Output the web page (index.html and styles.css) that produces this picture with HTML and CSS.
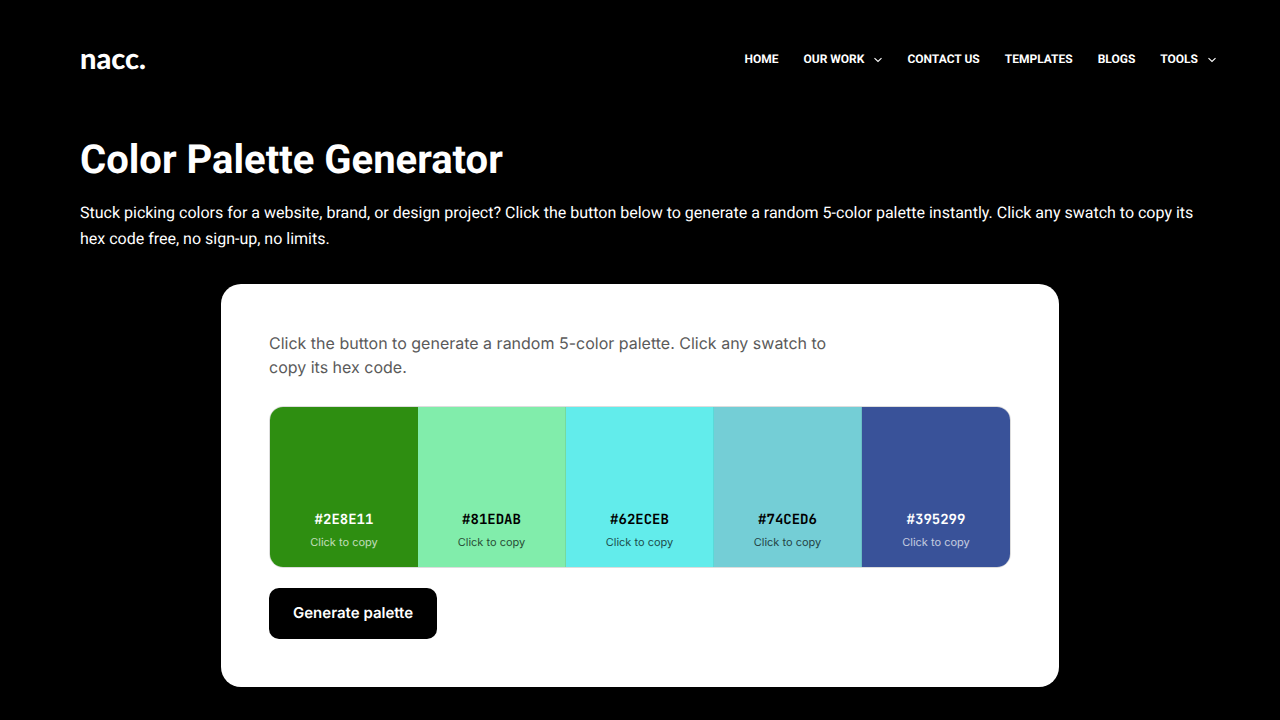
FILE: index.html
```html
<!DOCTYPE html>
<html lang="en">
<head>
<meta charset="utf-8">
<meta name="viewport" content="width=device-width, initial-scale=1">
<title>Color Palette Generator</title>
<link rel="stylesheet" href="styles.css">
</head>
<body>
<header class="header">
  <a class="logo" href="#">nacc.</a>
  <nav class="nav">
    <a href="#">HOME</a>
    <a href="#">OUR WORK <svg class="chevron" viewBox="0 0 8 8"><path d="M0.5 3.2 4 6.5 7.5 3.2"/></svg></a>
    <a href="#">CONTACT US</a>
    <a href="#">TEMPLATES</a>
    <a href="#">BLOGS</a>
    <a href="#">TOOLS <svg class="chevron" viewBox="0 0 8 8"><path d="M0.5 3.2 4 6.5 7.5 3.2"/></svg></a>
  </nav>
</header>
<main class="main">
  <h1 class="title">Color Palette Generator</h1>
  <p class="intro">Stuck picking colors for a website, brand, or design project? Click the button below to generate a random 5-color palette instantly. Click any swatch to copy its hex code free, no sign-up, no limits.</p>
  <section class="card">
    <p class="hint">Click the button to generate a random 5-color palette. Click any swatch to copy its hex code.</p>
    <div class="palette">
      <button class="swatch green light"><span class="hex">#2E8E11</span><span class="copy">Click to copy</span></button>
      <button class="swatch mint"><span class="hex">#81EDAB</span><span class="copy">Click to copy</span></button>
      <button class="swatch cyan"><span class="hex">#62ECEB</span><span class="copy">Click to copy</span></button>
      <button class="swatch teal"><span class="hex">#74CED6</span><span class="copy">Click to copy</span></button>
      <button class="swatch blue light"><span class="hex">#395299</span><span class="copy">Click to copy</span></button>
    </div>
    <button class="generate">Generate palette</button>
  </section>
</main>
</body>
</html>
```
FILE: styles.css
```css
* { box-sizing: border-box; }
body { margin: 0; background: #000; color: #fff; font-family: Roboto, sans-serif; text-rendering: geometricPrecision; }
.header { display: flex; align-items: center; justify-content: space-between; padding: 41px 64px 41px 80px; }
.logo { color: #fff; font: 900 29px/36px Lato, sans-serif; text-decoration: none; }
.nav { display: flex; gap: 25px; }
.nav a { display: flex; align-items: center; gap: 10px; color: #fff; font-size: 12px; line-height: 20px; font-weight: 700; text-decoration: none; }
.chevron { width: 8px; height: 8px; fill: none; stroke: #fff; stroke-width: 1.1; }
.main { padding: 12px 80px 32px; }
.title { margin: 0 0 10px; font-size: 40px; line-height: 60px; font-weight: 700; }
.intro { margin: 0 0 32px; font-size: 16px; line-height: 26px; }
.card { max-width: 838px; margin: 0 auto; padding: 47px 48px 48px; border-radius: 20px; background: #fff; font-family: Inter, sans-serif; }
.hint { max-width: 560px; margin: 0 0 27px; color: #5a5a5a; font-size: 16px; line-height: 24px; }
.palette { display: grid; grid-template-columns: repeat(5, 1fr); overflow: hidden; border: 1px solid #ddd; border-radius: 14px; }
.swatch { display: flex; flex-direction: column; align-items: center; justify-content: flex-end; gap: 3px; height: 160px; padding: 0 8px 16px; border: 0; border-right: 1px solid rgba(0, 0, 0, 0.08); color: #000; font-family: Inter, sans-serif; text-rendering: inherit; cursor: pointer; }
.swatch:first-child, .swatch:last-child { border-right: 0; }
.light { color: #fff; }
.green { background: #2e8e11; }
.mint { background: #81edab; }
.cyan { background: #62eceb; }
.teal { background: #74ced6; }
.blue { background: #395299; }
.hex { font: 600 14px/22px "JetBrains Mono", "DejaVu Sans Mono", monospace; }
.copy { font-size: 11px; line-height: 17px; opacity: 0.7; }
.generate { display: block; margin-top: 20px; padding: 12px 24px 14px; border: 0; border-radius: 10px; background: #000; color: #fff; font: 600 15px/25px Inter, sans-serif; text-rendering: inherit; cursor: pointer; }
```
